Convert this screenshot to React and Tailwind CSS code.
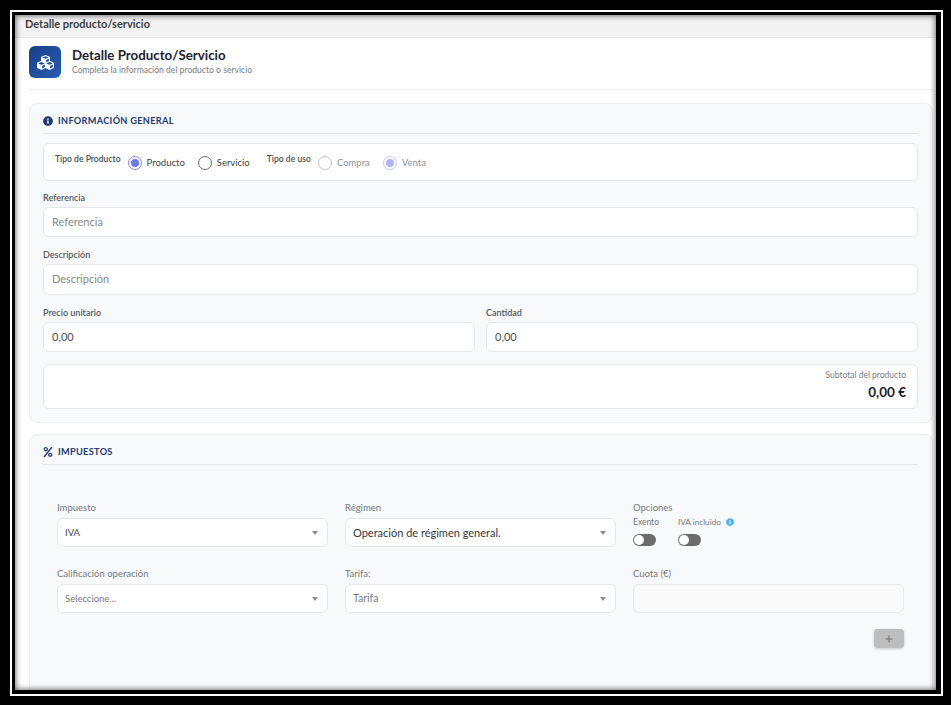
import { FaCubes, FaInfoCircle, FaPercent, FaPlus } from 'react-icons/fa'

function Radio({ label, checked, muted }) {
  return (
    <span className="flex items-center gap-[5px]">
      <span
        className={`flex h-[14px] w-[14px] items-center justify-center rounded-full border bg-white ${
          checked
            ? muted
              ? 'border-[#bfc3fb]'
              : 'border-[#7f86f5]'
            : muted
              ? 'border-[#c4c4c4]'
              : 'border-[#6b6b6b]'
        }`}
      >
        {checked && (
          <span className={`h-[8px] w-[8px] rounded-full ${muted ? 'bg-[#aeb3fa]' : 'bg-[#6f78f6]'}`} />
        )}
      </span>
      <span className={`text-[9.5px] ${muted ? 'text-[#8f9296]' : 'text-[#3d4043]'}`}>{label}</span>
    </span>
  )
}

function Campo({ label, placeholder, value, alto = 'h-[31px]', className = '' }) {
  return (
    <div className={className}>
      <div className="mb-[3px] text-[9px] leading-[12px] font-semibold text-[#54585c]">{label}</div>
      <div
        className={`flex ${alto} items-center rounded-[6px] border border-[#e4e7eb] bg-white px-[8px] text-[11px] ${
          value ? 'text-[#4a4d50]' : 'text-[#85888b]'
        }`}
      >
        {value || placeholder}
      </div>
    </div>
  )
}

function Select({ label, value, texto = 'text-[9.5px] text-[#45484b]' }) {
  return (
    <div>
      <div className="mb-[4px] text-[9.5px] leading-[13px] text-[#75797d]">{label}</div>
      <div className="flex h-[29px] items-center justify-between rounded-[6px] border border-[#e4e7eb] bg-white pt-[1px] pr-[9px] pl-[7px]">
        <span className={texto}>{value}</span>
        <span className="h-0 w-0 border-x-[3.5px] border-t-[4px] border-x-transparent border-t-[#8b8e91]" />
      </div>
    </div>
  )
}

function Interruptor() {
  return (
    <span className="flex h-[12px] w-[23px] items-center rounded-full bg-[#6b6b6b] pl-[1px]">
      <span className="h-[10px] w-[10px] rounded-full bg-white" />
    </span>
  )
}

function TituloSeccion({ icono, children }) {
  return (
    <div className="flex h-[26px] items-center gap-[5px] border-b border-[#e6e8eb] text-[#1e3a72]">
      {icono}
      <span className="text-[9.2px] font-bold tracking-[0.3px]">{children}</span>
    </div>
  )
}

export default function App() {
  return (
    <div className="h-[705px] w-[951px] overflow-hidden bg-black pt-[10px] pr-[8px] pb-[9px] pl-[10px] font-['Lato',sans-serif]">
      <div className="h-full w-full border-2 border-white">
        <div className="relative h-full w-full overflow-hidden border-[3px] border-r-[5px] border-b-[4px] border-black bg-white">
          <div className="flex h-[23px] items-center border-b border-[#e5e5e5] bg-[#f3f3f3] pb-[4px] pl-[10px] text-[11px] font-bold text-[#3a3d40]">
            Detalle producto/servicio
          </div>

          <div className="pr-[3px] pl-[14px]">
            <div className="flex h-[52px] items-start gap-[11px] border-b border-[#eeeeee] pt-[8px]">
              <div className="flex h-[32px] w-[32px] items-center justify-center rounded-[6px] bg-gradient-to-br from-[#173f8a] to-[#2a5cb0] text-white">
                <FaCubes size={17} />
              </div>
              <div>
                <div className="text-[13.3px] leading-[18px] font-bold text-[#1c2230]">Detalle Producto/Servicio</div>
                <div className="text-[8.6px] leading-[12px] text-[#787c80]">
                  Completa la información del producto o servicio
                </div>
              </div>
            </div>

            <section className="mt-[13px] h-[320px] rounded-[8px] border border-[#eceef1] bg-[#f8f9fb] pt-[4px] pr-[14px] pl-[13px]">
              <TituloSeccion icono={<FaInfoCircle size={10} />}>INFORMACIÓN GENERAL</TituloSeccion>
              <div className="mt-[9px] flex h-[38px] items-start rounded-[6px] border border-[#e4e7eb] bg-white pt-[9px] pl-[11px]">
                <span className="text-[8.6px] leading-[12px] font-semibold text-[#4a4d50]">Tipo de Producto</span>
                <span className="mt-[3px] ml-[7px] flex gap-[13px]">
                  <Radio label="Producto" checked />
                  <Radio label="Servicio" />
                </span>
                <span className="ml-[17px] text-[8.6px] leading-[12px] font-semibold text-[#4a4d50]">Tipo de uso</span>
                <span className="mt-[3px] ml-[7px] flex gap-[13px]">
                  <Radio label="Compra" muted />
                  <Radio label="Venta" checked muted />
                </span>
              </div>
              <Campo className="mt-[11px]" label="Referencia" placeholder="Referencia" alto="h-[30px]" />
              <Campo className="mt-[12px]" label="Descripción" placeholder="Descripción" />
              <div className="mt-[12px] grid grid-cols-2 gap-[11px]">
                <Campo label="Precio unitario" value="0,00" alto="h-[30px]" />
                <Campo label="Cantidad" value="0,00" alto="h-[30px]" />
              </div>
              <div className="mt-[12px] flex h-[45px] flex-col items-end rounded-[6px] border border-[#e4e7eb] bg-white pt-[4px] pr-[11px]">
                <span className="text-[8.5px] leading-[12px] text-[#787c80]">Subtotal del producto</span>
                <span className="mt-[3px] text-[13.5px] leading-[16px] font-bold text-[#1c2230]">0,00 €</span>
              </div>
            </section>

            <section className="mt-[11px] h-[300px] rounded-[8px] border border-[#eceef1] bg-[#f8f9fb] pt-[4px] pr-[14px] pl-[13px]">
              <TituloSeccion icono={<FaPercent size={10} />}>IMPUESTOS</TituloSeccion>
              <div className="grid grid-cols-3 gap-x-[17px] gap-y-[20px] px-[14px] pt-[36px]">
                <Select label="Impuesto" value="IVA" />
                <Select label="Régimen" value="Operación de régimen general." texto="text-[11px] text-[#35383b]" />
                <div>
                  <div className="text-[9.5px] leading-[13px] text-[#75797d]">Opciones</div>
                  <div className="mt-[2px] flex gap-[19px]">
                    <div>
                      <div className="text-[8.5px] leading-[12px] text-[#75797d]">Exento</div>
                      <div className="mt-[6px]"><Interruptor /></div>
                    </div>
                    <div>
                      <div className="flex items-center gap-[5px] text-[8.2px] leading-[12px] text-[#75797d]">
                        IVA incluido <FaInfoCircle size={8} className="text-[#3fb4ee]" />
                      </div>
                      <div className="mt-[6px]"><Interruptor /></div>
                    </div>
                  </div>
                </div>
                <Select label="Calificación operación" value="Seleccione..." texto="text-[9.5px] text-[#75797d]" />
                <Select label="Tarifa:" value="Tarifa" texto="text-[10.5px] text-[#75797d]" />
                <div>
                  <div className="mb-[4px] text-[9.5px] leading-[13px] text-[#75797d]">Cuota (€)</div>
                  <div className="h-[29px] rounded-[6px] border border-[#e8eaed] bg-[#fafafa]" />
                </div>
              </div>
              <div className="mt-[16px] flex justify-end pr-[14px]">
                <div className="flex h-[19px] w-[30px] items-center justify-center rounded-[4px] bg-[#bdbdbd] text-[#858585] shadow-[0_1px_3px_rgba(0,0,0,0.2)]">
                  <FaPlus size={8} />
                </div>
              </div>
            </section>
          </div>

          {/* sombra interior del marco de la captura */}
          <div className="pointer-events-none absolute inset-0 shadow-[inset_0_0_6px_rgba(0,0,0,0.7)]" />
        </div>
      </div>
    </div>
  )
}
